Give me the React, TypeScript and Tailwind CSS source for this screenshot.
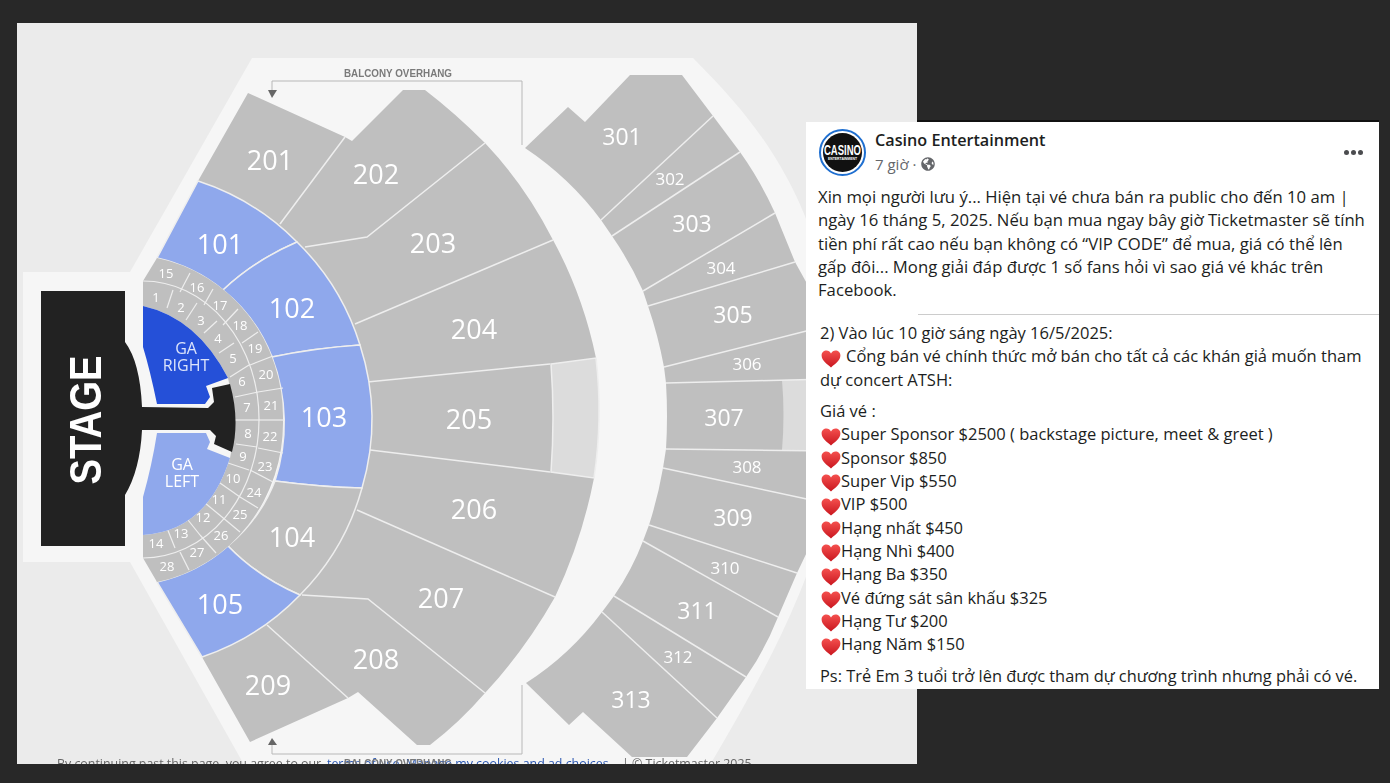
import React from 'react';
import { FaGlobeAmericas } from 'react-icons/fa';

const BLUE = '#8fa8ec';
const GRAY = '#bfbfbf';
const LINE = '#eeeeee';

// [label, x, y]
const bigLabels: [string, number, number][] = [
  ['201', 270, 160], ['202', 376, 174], ['203', 433, 243], ['204', 474, 329], ['205', 469, 419],
  ['206', 474, 509], ['207', 441, 598], ['208', 376, 659], ['209', 268, 685],
  ['101', 220, 244], ['102', 292, 308], ['103', 324, 417], ['104', 292, 537], ['105', 220, 604],
];
const midLabels: [string, number, number][] = [
  ['301', 622, 137], ['303', 692, 224], ['305', 733, 315], ['307', 724, 418], ['309', 733, 518],
  ['311', 697, 611], ['313', 631, 700],
];
const smallLabels: [string, number, number][] = [
  ['302', 670, 179], ['304', 721, 268], ['306', 747, 364], ['308', 747, 467], ['310', 725, 568], ['312', 678, 657],
];
const ringLabels: [string, number, number][] = [
  ['15', 166, 274], ['16', 197, 288], ['17', 220, 306], ['18', 240, 326], ['19', 255, 349], ['20', 266, 375],
  ['21', 271, 406], ['22', 270, 437], ['23', 265, 467], ['24', 254, 493], ['25', 240, 515], ['26', 221, 536],
  ['27', 197, 553], ['28', 167, 567], ['1', 156, 298], ['2', 181, 308], ['3', 201, 321], ['4', 218, 339],
  ['5', 233, 359], ['6', 242, 382], ['7', 247, 408], ['8', 248, 434], ['9', 243, 457], ['10', 233, 479],
  ['11', 219, 500], ['12', 203, 518], ['13', 181, 534], ['14', 156, 544],
];

// straight dividers
const ringLines = [
  [173, 290, 167, 308], [197, 303, 186, 320], [217, 321, 204, 333], [234, 343, 219, 353], [249, 365, 230, 377],
  [258, 392, 235, 397], [235, 420, 259, 420], [190, 273, 180, 292], [213, 289, 204, 305], [238, 309, 223, 325],
  [258, 332, 242, 343], [273, 356, 250, 365], [283, 388, 258, 392], [285, 420, 259, 420], [236, 444, 257, 447],
  [228, 463, 249, 470], [220, 483, 240, 497], [205, 503, 222, 517], [188, 520, 200, 535], [167, 528, 175, 548],
  [258, 448, 283, 453], [250, 470, 273, 482], [240, 497, 258, 508], [222, 517, 240, 532], [200, 535, 216, 553],
  [180, 552, 189, 570],
];
const upperLines = [
  [601, 220, 713, 116], [612, 236, 740, 152], [643, 291, 775, 213], [648, 306, 795, 262], [664, 367, 830, 325],
  [666, 383, 830, 379], [666, 449, 830, 451], [663, 468, 830, 504], [649, 525, 797, 573], [643, 541, 778, 617],
  [614, 596, 746, 677], [602, 612, 717, 718],
  [280, 224, 345, 137], [355, 324, 553, 240], [357, 383, 550, 364], [362, 449, 550, 472], [357, 510, 555, 597],
  [267, 625, 348, 698],
];

function SeatMap() {
  return (
    <svg viewBox="17 23 900 741" className="block w-[900px] h-[741px] blur-[0.4px]">
      {/* venue floor */}
      <path d="M252 58 L693 58 C750 115 806 180 830 300 L830 500 C807 597 760 680 707 770 L247 770 L130 562 L23 562 L23 272 L130 272 Z" fill="#f6f6f6" />

      {/* balcony overhang marks */}
      <path d="M272 90 V81 H522 V145" fill="none" stroke="#b8b8b8" strokeWidth="1" />
      <path d="M268 90 H277 L272 98 Z" fill="#666666" />
      <path d="M272 745 V754 H522 V685" fill="none" stroke="#b8b8b8" strokeWidth="1" />
      <path d="M268 745 H277 L272 738 Z" fill="#666666" />
      <text x="398" y="77" textAnchor="middle" textLength="108" lengthAdjust="spacingAndGlyphs" fill="#7a7a7a" className="text-[10px] font-bold font-['Liberation_Sans']">BALCONY OVERHANG</text>

      {/* 300 level */}
      <path d="M630 75 L682 75 L713 116 L740 152 Q760 180 775 213 L795 262 L830 325 L830 504 L797 573 L778 617 Q765 650 746 677 L717 718 L687 757 L632 757 L583 712 L569 725 L526 683 Q570 655 602 612 L614 596 Q632 570 643 541 L649 525 Q658 497 663 468 L666 449 Q668 416 666 383 L664 367 Q658 335 648 306 L643 291 Q630 262 612 236 L601 220 Q570 178 525 148 L568 107 L585 122 Z" fill={GRAY} />
      <path d="M782 380 Q785 415 782 450 L830 451 L830 379 Z" fill="#dcdcdc" />

      {/* 200 level */}
      <path d="M248 93 L345 137 L352 141 L403 90 L425 90 Q455 113 485 143 Q525 185 553 240 Q583 295 596 358 Q603 418 594 478 Q582 540 555 597 Q525 650 485 693 Q460 722 430 745 L417 745 L358 692 L348 698 L250 742 L202 657 L300 595 L362 488 L360 345 L297 242 L198 181 Z" fill={GRAY} />
      <path d="M551 364 L596 358 Q603 418 594 478 L551 472 Q555 418 551 364 Z" fill="#dcdcdc" stroke={LINE} strokeWidth="1.5" />
      <path d="M305 247 L367 237 L485 143" fill="none" stroke={LINE} strokeWidth="1.5" />
      <path d="M302 595 L368 599 L485 693" fill="none" stroke={LINE} strokeWidth="1.5" />
      {upperLines.map((l, i) => (
        <line key={i} x1={l[0]} y1={l[1]} x2={l[2]} y2={l[3]} stroke={LINE} strokeWidth="1.5" />
      ))}

      {/* 100 level */}
      <g stroke={LINE} strokeWidth="1.5">
        <path d="M198 181 A245 245 0 0 1 297 242 Q255 260 223 290 A160 160 0 0 0 157 258 Z" fill={BLUE} />
        <path d="M297 242 A245 245 0 0 1 360 345 Q315 348 272 357 A160 160 0 0 0 223 290 Q255 260 297 242 Z" fill={BLUE} />
        <path d="M360 345 A243 243 0 0 1 362 488 Q320 487 275 481 A185 185 0 0 0 272 357 Q315 348 360 345 Z" fill={BLUE} />
        <path d="M275 481 Q320 487 362 488 A243 243 0 0 1 300 595 Q258 577 228 546 A160 160 0 0 0 275 481 Z" fill={GRAY} />
        <path d="M228 546 Q258 577 300 595 A245 245 0 0 1 202 657 L157 582 A160 160 0 0 0 228 546 Z" fill={BLUE} />
      </g>

      {/* pit ring */}
      <path d="M157 258 A156 162 0 0 1 283 420 A156 162 0 0 1 157 582 L143 558 L143 281 Z" fill={GRAY} />
      <path d="M143 281 A116 138 0 0 1 259 420 A116 138 0 0 1 143 558" fill="none" stroke={LINE} strokeWidth="1.2" />
      {ringLines.map((l, i) => (
        <line key={i} x1={l[0]} y1={l[1]} x2={l[2]} y2={l[3]} stroke={LINE} strokeWidth="1.2" />
      ))}

      {/* GA floor and stage */}
      <path d="M143 306 Q197 318 228 378 Q238 420 230 458 Q207 531 143 535 Z" fill="#f6f6f6" />
      <path d="M143 306 Q197 318 228 378 L206 386 L210 397 L205 404 L157 404 Q150 370 143 347 Z" fill="#2550d8" />
      <path d="M157 433 L206 433 L210 442 L207 449 L230 458 Q207 531 143 535 L143 497 Q152 465 157 433 Z" fill={BLUE} />
      <path d="M41 291 H125 V342 Q140 362 142 407 L208 408 L214 402 L212 388 L230 384 Q240 420 232 452 L214 444 L216 436 L210 430 L142 430 Q140 470 125 495 V546 H41 Z" fill="#222222" />
      <text transform="translate(85 420) rotate(-90)" textAnchor="middle" dominantBaseline="central" textLength="129" lengthAdjust="spacingAndGlyphs" fill="#ffffff" className="text-[44px] font-bold font-['Liberation_Sans']">STAGE</text>

      {/* section numbers */}
      <g transform="translate(0 -1)" textAnchor="middle" dominantBaseline="central" fill="#ffffff" className="font-['Open_Sans']">
        {bigLabels.map(([t, x, y]) => <text key={t} x={x} y={y} className="text-[27px]">{t}</text>)}
        {midLabels.map(([t, x, y]) => <text key={t} x={x} y={y} className="text-[23px]">{t}</text>)}
        {smallLabels.map(([t, x, y]) => <text key={t} x={x} y={y} className="text-[17px]">{t}</text>)}
        {ringLabels.map(([t, x, y]) => <text key={t} x={x} y={y} className="text-[13px]">{t}</text>)}
        <text x="186" y="349" fill="#dce4fb" className="text-[16px]">GA</text>
        <text x="186" y="366" fill="#dce4fb" className="text-[16px]">RIGHT</text>
        <text x="182" y="465" className="text-[16px]">GA</text>
        <text x="182" y="482" className="text-[16px]">LEFT</text>
      </g>

      {/* footer, cut off by the crop */}
      <g className="text-[12.4px] font-['Open_Sans']" fill="#666666">
        <text x="57" y="768">By continuing past this page, you agree to our</text>
        <text x="327" y="768" fill="#2a56b0">terms of use. Manage my cookies and ad choices</text>
        <text x="622" y="768">| © Ticketmaster 2025</text>
      </g>
      <text x="398" y="767" textAnchor="middle" textLength="108" lengthAdjust="spacingAndGlyphs" fill="#7a7a7a" className="text-[10px] font-bold font-['Liberation_Sans']">BALCONY OVERHANG</text>
    </svg>
  );
}

function Heart() {
  return (
    <svg viewBox="0 0 20 20" className="w-5 h-5 shrink-0 -mb-[5px] ml-px">
      <defs>
        <linearGradient id="h" x1="0" y1="0" x2="0" y2="1">
          <stop offset="0" stopColor="#f4504e" />
          <stop offset="1" stopColor="#c9161f" />
        </linearGradient>
      </defs>
      <path d="M10 18.5 C6 15 .6 11.5 .6 6.6 C.6 3.4 3 1.6 5.4 1.6 C7.4 1.6 9 2.7 10 4.4 C11 2.7 12.6 1.6 14.6 1.6 C17 1.6 19.4 3.4 19.4 6.6 C19.4 11.5 14 15 10 18.5 Z" fill="url(#h)" />
    </svg>
  );
}

const prices = [
  'Super Sponsor $2500 ( backstage picture, meet & greet )',
  'Sponsor $850',
  'Super Vip $550',
  'VIP $500',
  'Hạng nhất $450',
  'Hạng Nhì $400',
  'Hạng Ba $350',
  'Vé đứng sát sân khấu $325',
  'Hạng Tư $200',
  'Hạng Năm $150',
];

function PostCard() {
  return (
    <div className="absolute left-[806px] top-[122px] w-[573px] h-[567px] bg-white overflow-hidden font-['Open_Sans','Noto_Sans',sans-serif] text-[#1c1e21] leading-[23.35px] whitespace-nowrap">
      {/* header */}
      <div className="flex items-start pl-[13px] pt-[7px] h-[63px]">
        <svg viewBox="0 0 47 47" className="w-[47px] h-[47px] shrink-0">
          <circle cx="23.5" cy="23.5" r="22.5" fill="#ffffff" stroke="#1f6fd0" strokeWidth="2" />
          <circle cx="23.5" cy="23.5" r="19.5" fill="#111111" />
          <text x="23.5" y="26" textAnchor="middle" textLength="37" lengthAdjust="spacingAndGlyphs" fill="#ffffff" className="text-[14px] font-bold font-['Liberation_Sans']">CASINO</text>
          <text x="23.5" y="31" textAnchor="middle" textLength="29" lengthAdjust="spacingAndGlyphs" fill="#ffffff" className="text-[3px] font-bold font-['Liberation_Sans']">ENTERTAINMENT</text>
        </svg>
        <div className="ml-[9px]">
          <div className="text-[16.2px] leading-[22px] font-semibold text-[#1c1e21]">Casino Entertainment</div>
          <div className="flex items-center text-[15px] leading-[20px] text-[#65676b] mt-[3px]">
            <span>7 giờ ·</span>
            <FaGlobeAmericas className="ml-[5px] w-[14px] h-[14px]" />
          </div>
        </div>
        <div className="ml-auto mr-[16px] mt-[21px] flex gap-[2px]">
          <div className="w-[5px] h-[5px] rounded-full bg-[#4b4c4f]" />
          <div className="w-[5px] h-[5px] rounded-full bg-[#4b4c4f]" />
          <div className="w-[5px] h-[5px] rounded-full bg-[#4b4c4f]" />
        </div>
      </div>

      {/* first note */}
      <div className="pl-[12px] h-[129px] text-[16.7px]">
        <div>Xin mọi người lưu ý... Hiện tại vé chưa bán ra public cho đến 10 am |</div>
        <div>ngày 16 tháng 5, 2025. Nếu bạn mua ngay bây giờ Ticketmaster sẽ tính</div>
        <div>tiền phí rất cao nếu bạn không có “VIP CODE” để mua, giá có thể lên</div>
        <div>gấp đôi... Mong giải đáp được 1 số fans hỏi vì sao giá vé khác trên</div>
        <div>Facebook.</div>
      </div>

      <div className="ml-[112px] h-px bg-[#cccccc]" />

      {/* second note */}
      <div className="pl-[14px] pt-[6px] text-[16.5px]">
        <div>2) Vào lúc 10 giờ sáng ngày 16/5/2025:</div>
        <div className="flex items-center"><Heart /><span className="ml-[5px]">Cổng bán vé chính thức mở bán cho tất cả các khán giả muốn tham</span></div>
        <div>dự concert ATSH:</div>
        <div className="mt-[8px]">Giá vé :</div>
        {prices.map((p) => (
          <div key={p} className="flex items-center"><Heart /><span>{p}</span></div>
        ))}
        <div className="mt-[8px] text-[16.4px]">Ps: Trẻ Em 3 tuổi trở lên được tham dự chương trình nhưng phải có vé.</div>
      </div>
    </div>
  );
}

export default function App() {
  return (
    <div className="relative w-[1390px] h-[783px] bg-[#282828] overflow-hidden pl-[17px] pt-[23px]">
      <div className="w-[900px] h-[741px] bg-[#ebebeb] overflow-hidden">
        <SeatMap />
      </div>
      {/* dark edge left over the top of the pasted post */}
      <div className="absolute left-[917px] top-[120px] w-[462px] h-[2px] bg-[#111111]" />
      <PostCard />
    </div>
  );
}
